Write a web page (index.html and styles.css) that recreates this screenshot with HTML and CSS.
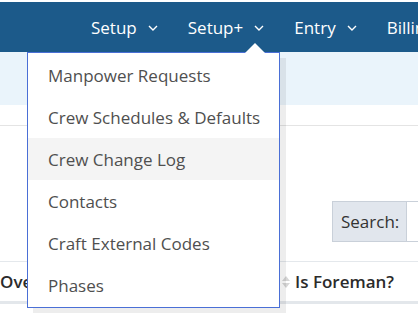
FILE: index.html
```html
<!DOCTYPE html>
<html>
<head>
<meta charset="utf-8">
<link rel="stylesheet" href="styles.css">
</head>
<body>
<div class="topline"></div>
<nav class="navbar">
  <div class="nav-item">Setup<svg class="chev" width="10" height="6" viewBox="0 0 10 6"><path d="M1 1 L5 5 L9 1" fill="none" stroke="#fff" stroke-width="1.4"/></svg></div>
  <div class="nav-item">Setup+<svg class="chev" width="10" height="6" viewBox="0 0 10 6"><path d="M1 1 L5 5 L9 1" fill="none" stroke="#fff" stroke-width="1.4"/></svg></div>
  <div class="nav-item">Entry<svg class="chev" width="10" height="6" viewBox="0 0 10 6"><path d="M1 1 L5 5 L9 1" fill="none" stroke="#fff" stroke-width="1.4"/></svg></div>
  <div class="nav-item">Billing</div>
</nav>
<div class="band"></div>
<div class="toolbar"></div>
<div class="controls">
  <div class="search"><span class="search-label">Search:</span><span class="search-input"></span></div>
</div>
<div class="thead">
  <div class="th th-over"><span class="clip">Ove</span></div>
  <div class="th th-fore"><span class="sort"></span>Is Foreman?</div>
</div>

<div class="dropdown">
  <div class="caret"></div>
  <div class="dd-item">Manpower Requests</div>
  <div class="dd-item">Crew Schedules &amp; Defaults</div>
  <div class="dd-item active">Crew Change Log</div>
  <div class="dd-item">Contacts</div>
  <div class="dd-item">Craft External Codes</div>
  <div class="dd-item">Phases</div>
</div>
</body>
</html>
```

FILE: styles.css
```css
html, body {
  margin: 0;
  padding: 0;
  background: #fff;
  font-family: "Open Sans", "Noto Sans", sans-serif;
  overflow: hidden;
  width: 418px;
  height: 313px;
  position: relative;
}
.topline {
  height: 2px;
  background: #fff;
}
.navbar {
  height: 50px;
  background: #1c5a8a;
  display: flex;
  align-items: center;
  padding-left: 91px;
  color: #fff;
  font-size: 17px;
  white-space: nowrap;
  box-sizing: border-box;
  overflow: hidden;
}
.nav-item {
  display: flex;
  align-items: center;
  margin-right: 30px;
}
.chev {
  margin-left: 11px;
  margin-top: 2px;
}
.band {
  height: 53px;
  background: #eaf4fb;
}
.toolbar {
  height: 20px;
  border-bottom: 1px solid #e4e4e4;
}
.controls {
  height: 136px;
  display: flex;
  justify-content: flex-end;
  padding-top: 75px;
  box-sizing: border-box;
  border-bottom: 1px solid #e4e8ec;
}
.search {
  display: flex;
  height: 41px;
  margin-right: -40px;
}
.search-label {
  width: 75px;
  box-sizing: border-box;
  padding-left: 8px;
  background: #e1e6ed;
  border: 1px solid #c9d0d9;
  display: flex;
  align-items: center;
  font-size: 17px;
  color: #333;
}
.search-input {
  width: 50px;
  border: 1px solid #c9d0d9;
  border-left: none;
}
.thead {
  height: 39px;
  border-bottom: 3px solid #e3e7eb;
  display: flex;
  align-items: center;
  font-weight: 600;
  font-size: 17px;
  color: #2b2b2b;
}
.th-over {
  width: 282px;
}
.clip {
  display: inline-block;
  white-space: nowrap;
}
.th-fore {
  display: flex;
  align-items: center;
}
.sort {
  width: 0;
  height: 0;
  border-left: 4px solid transparent;
  border-right: 4px solid transparent;
  border-bottom: 5px solid #d6d6d6;
  margin-right: 5px;
  position: relative;
  top: -3px;
}
.sort::after {
  content: "";
  position: absolute;
  left: -4px;
  top: 7px;
  border-left: 4px solid transparent;
  border-right: 4px solid transparent;
  border-top: 5px solid #d6d6d6;
}
.dropdown {
  position: absolute;
  left: 27px;
  top: 52px;
  width: 253px;
  box-sizing: border-box;
  background: #fff;
  border: 1px solid #4a6fd6;
  padding: 1px 0 1px 0;
  box-shadow: 6px 6px 0 rgba(0, 0, 0, 0.07);
}
.caret {
  position: absolute;
  left: 217px;
  top: -10px;
  width: 0;
  height: 0;
  border-left: 10px solid transparent;
  border-right: 10px solid transparent;
  border-bottom: 10px solid #fff;
}
.dd-item {
  height: 42px;
  display: flex;
  align-items: center;
  padding-left: 20px;
  font-size: 17px;
  color: #4f4f4f;
  white-space: nowrap;
}
.dd-item.active {
  background: #f4f4f4;
}
```
